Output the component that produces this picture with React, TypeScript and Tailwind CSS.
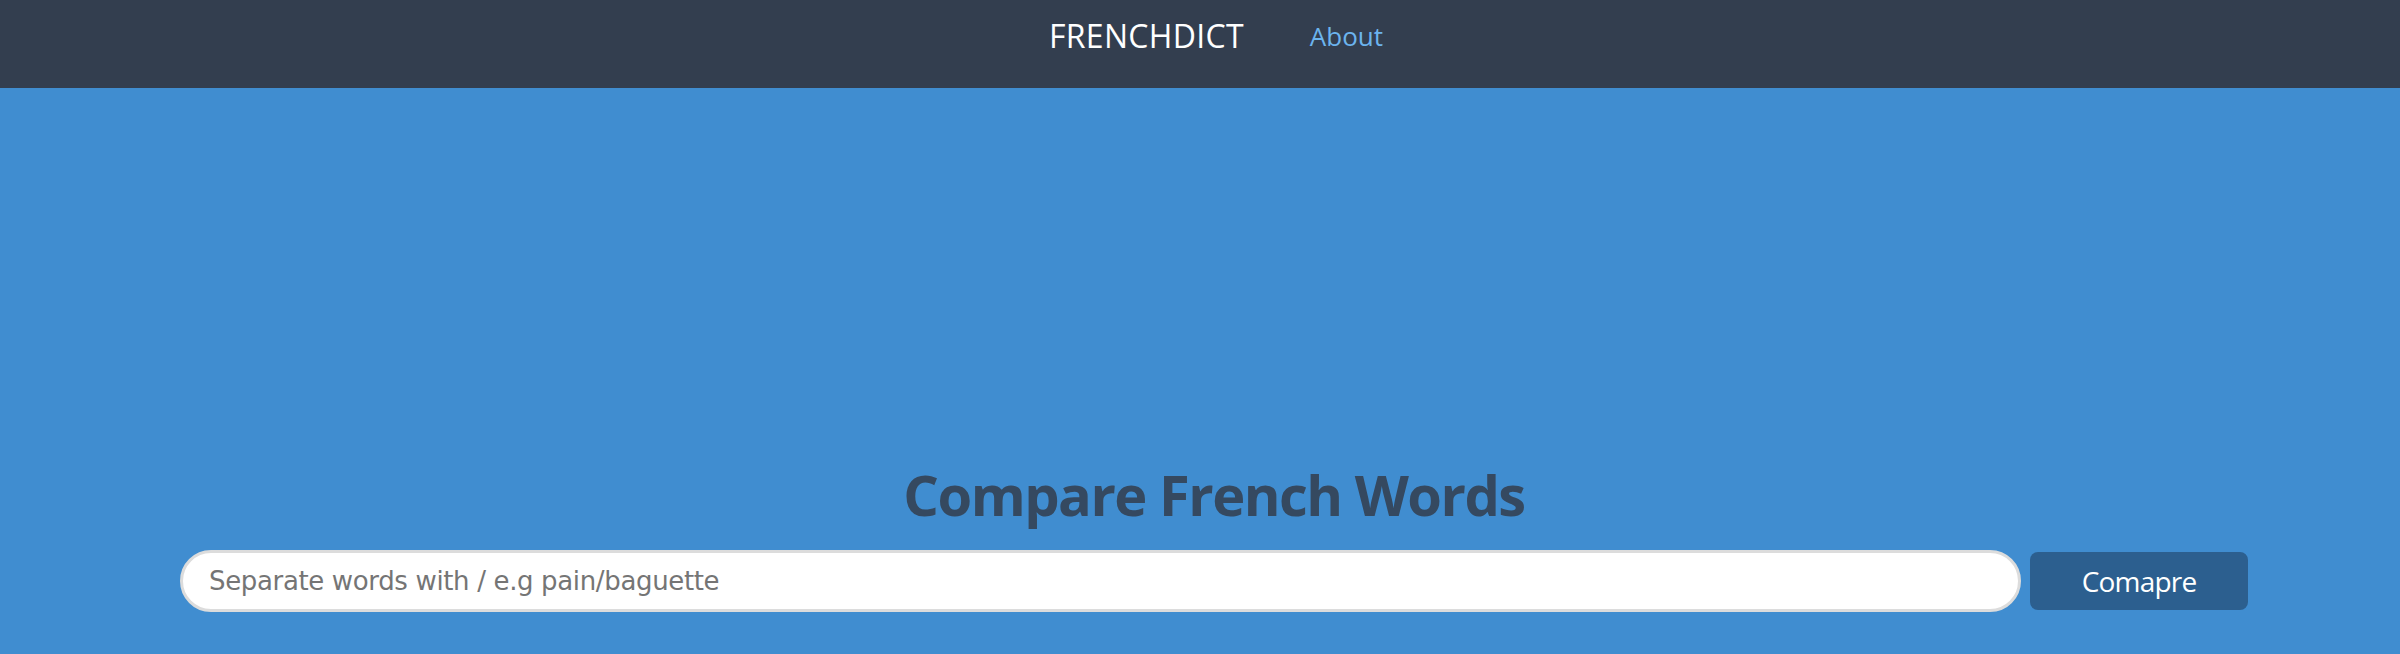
import { useState } from "react";

const font = { fontFamily: '"Open Sans", "DejaVu Sans", sans-serif' };

function NavBar() {
  return (
    <nav className="h-[88px] bg-[#333e4f] flex justify-center items-start pl-[32px] gap-[66px]">
      <a href="#" className="pt-[20px] text-[32px] leading-[32px] tracking-[0.3px] text-white">
        FRENCHDICT
      </a>
      <a href="#" className="pt-[23px] text-[26px] leading-[26px] text-[#6cb4ee]">
        About
      </a>
    </nav>
  );
}

export default function App() {
  const [query, setQuery] = useState("");

  return (
    <div className="min-h-[654px] flex flex-col bg-[#408dd0]" style={font}>
      <NavBar />
      <main className="flex-1 pt-[378px] pl-[180px] pr-[152px]">
        <h1 className="text-center text-[56px] leading-[56px] font-bold tracking-[-1.5px] text-[#354960]">
          Compare French Words
        </h1>
        <form
          className="mt-[28px] flex items-center gap-[9px]"
          onSubmit={(e) => e.preventDefault()}
        >
          <input
            type="text"
            value={query}
            onChange={(e) => setQuery(e.target.value)}
            placeholder="Separate words with / e.g pain/baguette"
            className="flex-1 h-[62px] rounded-full border-[3px] border-[#dcdcdc] bg-white px-[26px] font-['DejaVu_Sans',sans-serif] text-[26px] tracking-[-0.35px] text-gray-800 placeholder:text-[#757575] outline-none"
          />
          <button
            type="submit"
            className="w-[218px] h-[58px] rounded-[8px] bg-[#2c5f8f] text-[28px] tracking-[-0.8px] text-white"
          >
            Comapre
          </button>
        </form>
      </main>
    </div>
  );
}
